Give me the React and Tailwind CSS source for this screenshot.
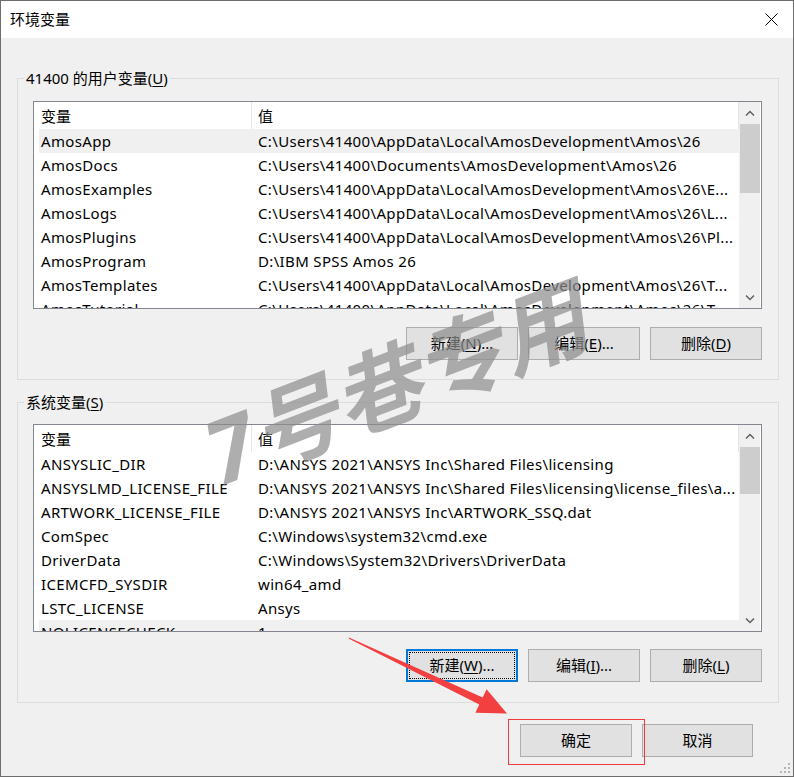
import React from "react";

const FONT = { fontFamily: '"Noto Sans", "Noto Sans CJK SC", sans-serif' };

const userVars = [
  ["AmosApp", "C:\\Users\\41400\\AppData\\Local\\AmosDevelopment\\Amos\\26"],
  ["AmosDocs", "C:\\Users\\41400\\Documents\\AmosDevelopment\\Amos\\26"],
  ["AmosExamples", "C:\\Users\\41400\\AppData\\Local\\AmosDevelopment\\Amos\\26\\E..."],
  ["AmosLogs", "C:\\Users\\41400\\AppData\\Local\\AmosDevelopment\\Amos\\26\\L..."],
  ["AmosPlugins", "C:\\Users\\41400\\AppData\\Local\\AmosDevelopment\\Amos\\26\\Pl..."],
  ["AmosProgram", "D:\\IBM SPSS Amos 26"],
  ["AmosTemplates", "C:\\Users\\41400\\AppData\\Local\\AmosDevelopment\\Amos\\26\\T..."],
  ["AmosTutorial", "C:\\Users\\41400\\AppData\\Local\\AmosDevelopment\\Amos\\26\\T..."],
];

const sysVars = [
  ["ANSYSLIC_DIR", "D:\\ANSYS 2021\\ANSYS Inc\\Shared Files\\licensing"],
  ["ANSYSLMD_LICENSE_FILE", "D:\\ANSYS 2021\\ANSYS Inc\\Shared Files\\licensing\\license_files\\a..."],
  ["ARTWORK_LICENSE_FILE", "D:\\ANSYS 2021\\ANSYS Inc\\ARTWORK_SSQ.dat"],
  ["ComSpec", "C:\\Windows\\system32\\cmd.exe"],
  ["DriverData", "C:\\Windows\\System32\\Drivers\\DriverData"],
  ["ICEMCFD_SYSDIR", "win64_amd"],
  ["LSTC_LICENSE", "Ansys"],
  ["NOLICENSECHECK", "1"],
];

const Chevron = ({ down }) => (
  <svg width="10" height="7" viewBox="0 0 10 7">
    <polyline
      points={down ? "1,1.5 5,5.5 9,1.5" : "1,5.5 5,1.5 9,5.5"}
      fill="none"
      stroke="#606060"
      strokeWidth="1.5"
    />
  </svg>
);

const VarList = ({ rows, highlight, thumb }) => (
  <div className="h-[208px] border border-[#828790] bg-white flex overflow-hidden">
    <div className="flex-1 pl-[5px] overflow-hidden">
      <div className="h-[27px] flex items-center">
        <div className="w-[212px] pl-[2px] pt-[2px]">变量</div>
        <div className="w-px h-full bg-[#e5e5e5]" />
        <div className="flex-1 pl-[6px] pt-[2px]">值</div>
        <div className="w-px h-full bg-[#e5e5e5]" />
      </div>
      {rows.map(([name, value], i) => (
        <div
          key={name}
          className={`h-[24px] flex items-center whitespace-nowrap tracking-[0.35px] ${i === highlight ? "bg-[#f0f0f0]" : ""}`}
        >
          <div className="w-[212px] pl-[2px] overflow-hidden">{name}</div>
          <div className="flex-1 pl-[7px] overflow-hidden text-ellipsis">{value}</div>
        </div>
      ))}
    </div>
    <div className="w-[21px] mr-[1px] bg-[#f0f0f0] flex flex-col">
      <div className="h-[22px] flex items-center justify-center">
        <Chevron />
      </div>
      <div className="flex-1">
        <div className={`ml-[1px] bg-[#cdcdcd] ${thumb}`} />
      </div>
      <div className="h-[22px] flex items-center justify-center">
        <Chevron down />
      </div>
    </div>
  </div>
);

const Btn = ({ label, keyChar, tail = "", focused, w = "w-[112px]" }) => (
  <button
    className={`${w} h-[33px] bg-[#e1e1e1] text-black flex items-center justify-center ${
      focused
        ? "border-2 border-[#0078d7] outline-1 outline-dotted outline-black outline-offset-[-4px]"
        : "border border-[#adadad]"
    }`}
  >
    {label}
    {keyChar && (
      <>
        (<span className="underline underline-offset-2">{keyChar}</span>){tail}
      </>
    )}
  </button>
);

const Group = ({ title, keyChar, children, className = "" }) => (
  <fieldset className={`border border-[#dcdcdc] ${className}`}>
    <legend className="ml-[6px] px-[2px] leading-[20px]">
      {title}(<span className="underline underline-offset-2">{keyChar}</span>)
    </legend>
    {children}
  </fieldset>
);

export default function App() {
  return (
    <div
      className="relative w-[794px] h-[777px] bg-[#f0f0f0] border border-[#6d6d6d] overflow-hidden text-[15px] text-black"
      style={FONT}
    >
      <div className="h-[37px] bg-white flex items-center justify-between pl-[9px] pr-[15px]">
        <span>环境变量</span>
        <svg width="13" height="13" viewBox="0 0 13 13">
          <path d="M0.5 0.5 L12.5 12.5 M12.5 0.5 L0.5 12.5" stroke="#000" strokeWidth="1" />
        </svg>
      </div>

      <div className="pl-[16px] pr-[14px]">
        <Group title="41400 的用户变量" keyChar="U" className="mt-[30px]">
          <div className="pl-[15px] pr-[16px] pt-[13px] pb-[19px]">
            <VarList rows={userVars} highlight={0} thumb="h-[69px]" />
            <div className="mt-[18px] flex justify-end gap-[10px]">
              <Btn label="新建" keyChar="N" tail="..." />
              <Btn label="编辑" keyChar="E" tail="..." />
              <Btn label="删除" keyChar="D" />
            </div>
          </div>
        </Group>

        <Group title="系统变量" keyChar="S" className="mt-[12px]">
          <div className="pl-[15px] pr-[16px] pt-[12px] pb-[20px]">
            <VarList rows={sysVars} highlight={7} thumb="h-[47px]" />
            <div className="mt-[17px] flex justify-end gap-[10px]">
              <Btn label="新建" keyChar="W" tail="..." focused />
              <Btn label="编辑" keyChar="I" tail="..." />
              <Btn label="删除" keyChar="L" />
            </div>
          </div>
        </Group>

        <div className="mt-[21px] flex justify-end gap-[10px] pr-[26px]">
          <Btn label="确定" />
          <Btn label="取消" w="w-[111px]" />
        </div>
      </div>

      {/* watermark */}
      <div className="absolute left-[394px] top-[382px] -translate-x-1/2 -translate-y-1/2 -rotate-[21deg] whitespace-nowrap text-[88px] font-bold italic leading-none text-[#8c8c8c]/70 pointer-events-none select-none">
        7号巷专用
      </div>

      {/* annotation */}
      <div className="absolute left-[507px] top-[718px] w-[137px] h-[46px] border border-[#f03c3c]" />
      <svg className="absolute left-0 top-0 pointer-events-none" width="794" height="777">
        <polygon
          points="348,636.5 481.7,696.4 485.6,688.3 506,712.5 474.4,711.7 478.3,703.6 348,637.8"
          fill="#f23f3f"
        />
      </svg>

      {/* size grip */}
      <svg className="absolute right-[2px] bottom-[2px]" width="12" height="12" viewBox="0 0 12 12">
        {[[9, 1], [5, 5], [9, 5], [1, 9], [5, 9], [9, 9]].map(([x, y]) => (
          <rect key={`${x}-${y}`} x={x} y={y} width="2" height="2" fill="#b5b5b5" />
        ))}
      </svg>
    </div>
  );
}
